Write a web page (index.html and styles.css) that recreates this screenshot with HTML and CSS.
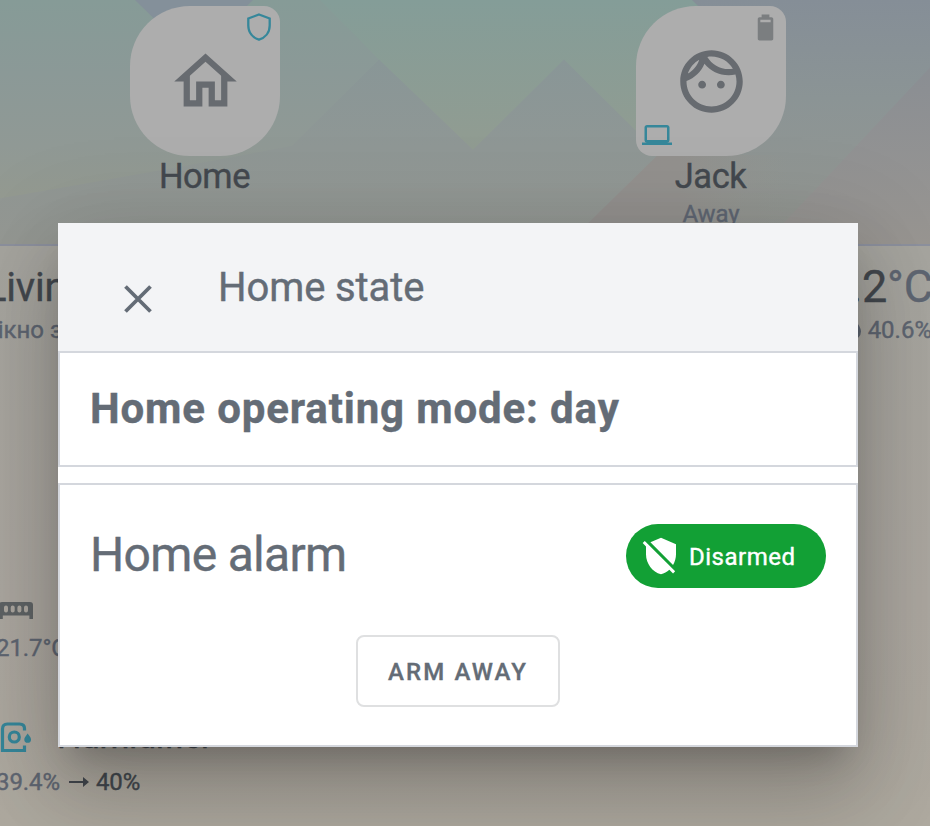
FILE: index.html
```html
<!DOCTYPE html>
<html lang="en">
<head>
<meta charset="utf-8">
<title>Home state</title>
<link rel="stylesheet" href="styles.css">
</head>
<body>
<div class="app">
  <header class="people">
    <svg class="scenery" viewBox="0 0 930 246" preserveAspectRatio="none">
      <defs>
        <linearGradient id="sky" x1="0" y1="0" x2="0" y2="1"><stop offset="0" stop-color="#849d98"/><stop offset=".55" stop-color="#909c92"/><stop offset="1" stop-color="#8f938c"/></linearGradient>
        <linearGradient id="hill" gradientUnits="userSpaceOnUse" x1="0" y1="50" x2="0" y2="246"><stop offset="0" stop-color="#889697"/><stop offset=".5" stop-color="#8f9795"/><stop offset="1" stop-color="#959893"/></linearGradient>
        <linearGradient id="left" gradientUnits="userSpaceOnUse" x1="0" y1="0" x2="0" y2="246"><stop offset="0" stop-color="#869b97"/><stop offset=".3" stop-color="#8b9997"/><stop offset=".6" stop-color="#909995"/><stop offset=".8" stop-color="#949a91"/><stop offset="1" stop-color="#979c93"/></linearGradient>
        <linearGradient id="right" x1="0" y1="0" x2="0" y2="1"><stop offset="0" stop-color="#858e97"/><stop offset=".4" stop-color="#8b9495"/><stop offset="1" stop-color="#959791"/></linearGradient>
        <linearGradient id="far" x1="0" y1="0" x2="0" y2="1"><stop offset="0" stop-color="#8a8e93"/><stop offset="1" stop-color="#999692"/></linearGradient>
        <linearGradient id="near" x1="0" y1="0" x2="1" y2="0"><stop offset="0" stop-color="#93908e"/><stop offset=".5" stop-color="#93918e"/><stop offset="1" stop-color="#939590" stop-opacity="0"/></linearGradient>
      </defs>
      <rect width="930" height="246" fill="url(#sky)"/>
      <path d="M0 0H320L379 60L280 160L240 246H0Z" fill="url(#left)"/>
      <path d="M135 0H253L194 58Z" fill="#84909a"/>
      <path d="M292 147L379 60L473 151L564 60L750 246H0V200Q200 165 292 147Z" fill="url(#hill)"/>
      <path d="M692 0H930V246H590L700 110L760 68Z" fill="url(#right)"/>
      <path d="M590 223L658 156H790V246H568Z" fill="url(#near)"/>
      <path d="M930 68V246H764Z" fill="url(#far)"/>
    </svg>
    <div class="person">
      <div class="tile tile-home">
        <svg class="main-icon" viewBox="0 0 24 24"><path d="M12 5.69L17 10.19V18H15V12H9V18H7V10.19L12 5.69M12 3L2 12H5V20H11V14H13V20H19V12H22L12 3"/></svg>
        <svg class="corner-icon shield" viewBox="0 0 24 28"><path d="M12 1.5L22.7 5.5V12.5C22.7 19.8 18 24.8 12 26.7C6 24.8 1.3 19.8 1.3 12.5V5.5Z"/></svg>
      </div>
      <div class="name">Home</div>
    </div>
    <div class="person">
      <div class="tile tile-jack">
        <svg class="main-icon" viewBox="0 0 24 24"><path fill-rule="evenodd" d="M10.25,13c0,0.69-0.56,1.25-1.25,1.25S7.75,13.69,7.75,13S8.31,11.75,9,11.75S10.25,12.31,10.25,13z M15,11.75c-0.69,0-1.25,0.56-1.25,1.25s0.56,1.25,1.25,1.25s1.25-0.56,1.25-1.25S15.69,11.75,15,11.75z M22,12c0,5.52-4.48,10-10,10S2,17.52,2,12S6.48,2,12,2S22,6.48,22,12z M10.66,4.12C12.06,6.44,14.6,8,17.5,8c0.46,0,0.91-0.05,1.34-0.12C17.44,5.56,14.9,4,12,4C11.54,4,11.09,4.05,10.66,4.12z M4.42,9.47c1.71-0.97,3.03-2.55,3.66-4.44C6.37,6,5.05,7.58,4.42,9.47z M20,12c0-0.78-0.12-1.53-0.33-2.24C18.97,9.91,18.25,10,17.5,10c-3.13,0-5.92-1.44-7.76-3.69C8.69,8.87,6.6,10.88,4,11.86C4.01,11.9,4,11.95,4,12c0,4.41,3.59,8,8,8S20,16.41,20,12z"/></svg>
        <svg class="corner-icon battery" viewBox="0 0 24 24"><path d="M16 8H8V6H16M16.67 4H15V2H9V4H7.33C6.6 4 6 4.6 6 5.33V20.67C6 21.4 6.6 22 7.33 22H16.67C17.41 22 18 21.41 18 20.67V5.33C18 4.6 17.4 4 16.67 4Z"/></svg>
        <svg class="corner-icon laptop" viewBox="0 0 24 24"><path d="M4,6H20V16H4M20,18A2,2 0 0,0 22,16V6C22,4.89 21.1,4 20,4H4C2.89,4 2,4.89 2,6V16A2,2 0 0,0 4,18H0V20H24V18H20Z"/></svg>
      </div>
      <div class="name">Jack</div>
      <div class="presence">Away</div>
    </div>
  </header>
  <main class="room">
    <div class="room-head">
      <div class="room-name">Living room</div>
      <div class="room-temp">22.2<span>°C</span></div>
    </div>
    <div class="room-sub">
      <div>вікно зачинене</div>
      <div class="humidity"><svg viewBox="0 0 18 24"><path d="M9 1C13 7 17 11 17 15.500A8 8 0 0 1 1 15.500C1 11 5 7 9 1Z"/></svg>40.6%</div>
    </div>
    <div class="device radiator">
      <svg viewBox="0 0 36 17"><path fill-rule="evenodd" d="M5 0H33Q36 0 36 3V17H32.400V13.500H5.800V17H2V3Q2 0 5 0ZM9 3.500Q7 3.500 7 5.500V8.500Q7 10.500 9 10.500Q11 10.500 11 8.500V5.500Q11 3.500 9 3.500ZM15.700 3.500Q13.700 3.500 13.700 5.500V8.500Q13.700 10.500 15.700 10.500Q17.700 10.500 17.700 8.500V5.500Q17.700 3.500 15.700 3.500ZM22.400 3.500Q20.400 3.500 20.400 5.500V8.500Q20.400 10.500 22.400 10.500Q24.400 10.500 24.400 8.500V5.500Q24.400 3.500 22.400 3.500ZM29 3.500Q27 3.500 27 5.500V8.500Q27 10.500 29 10.500Q31 10.500 31 8.500V5.500Q31 3.500 29 3.500Z"/></svg>
      <div class="reading">21.7°C</div>
    </div>
    <div class="device humidifier">
      <div class="device-head">
        <svg viewBox="0 0 31 31"><path class="line" d="M24.500 8.500V6.500Q24.500 2 19.500 2H7.500Q2.500 2 2.500 7V28.500H24.500V23.500"/><circle class="line" cx="14.300" cy="15" r="5"/><path class="drop" d="M27.600 11.500C29.500 14 31 15.500 31 17.500A3.300 3.300 0 0 1 24.300 17.500C24.300 15.500 26 14 27.600 11.500Z"/></svg>
        <span>Humidifier</span>
      </div>
      <div class="reading">39.4%<svg class="arrow" viewBox="0 0 20 12"><path d="M0 5H14V1L20 6L14 11V7H0Z"/></svg><b>40%</b></div>
    </div>
  </main>
  <section class="dialog">
    <div class="dialog-head">
      <svg class="close" viewBox="0 0 28 28"><path d="M1.500 1.500L26.500 26.500M26.500 1.500L1.500 26.500"/></svg>
      <div class="dialog-title">Home state</div>
    </div>
    <div class="card mode">Home operating mode: day</div>
    <div class="card alarm">
      <div class="alarm-head">
        <div class="alarm-title">Home alarm</div>
        <div class="chip">
          <svg viewBox="0 0 24 24"><path d="M1,4.27L2.28,3L20.500,21.22L19.230,22.500L17,20.250C15.570,21.570 13.870,22.540 12,23C6.840,21.740 3,16.550 3,11V6.270L1,4.270M12,1L21,5V11C21,13.280 20.350,15.500 19.230,17.410L5.650,3.820L12,1Z"/></svg>
          <span>Disarmed</span>
        </div>
      </div>
      <button class="arm"><span>ARM AWAY</span></button>
    </div>
  </section>
</div>
</body>
</html>
```
FILE: styles.css
```css
* { box-sizing: border-box; }
body { margin: 0; font-family: Roboto, sans-serif; -webkit-text-stroke: .4px currentColor; }
svg { display: block; flex: none; }

.app {
  position: relative;
  width: 930px;
  height: 826px;
  overflow: hidden;
  background: linear-gradient(#a6a59f 246px, #aca7a0 600px, #aea99f);
}

.people {
  position: relative;
  height: 246px;
  display: grid;
  grid-template-columns: 506px 506px;
  margin-left: -48px;
  padding-top: 6px;
}
.scenery { position: absolute; left: 48px; top: 0; width: 930px; height: 246px; border-bottom: 2px solid #8d919e; }
.person { position: relative; display: flex; flex-direction: column; align-items: center; }
.tile {
  position: relative;
  width: 150px;
  height: 150px;
  display: flex;
  align-items: center;
  justify-content: center;
  background: #adadad;
}
.tile-home { border-radius: 60px 16px 60px 60px; }
.tile-jack { border-radius: 60px 16px 60px 16px; }
.main-icon { width: 75px; height: 75px; fill: #676b70; }
.corner-icon { position: absolute; }
.shield { left: 117px; top: 7px; width: 24px; height: 28px; fill: none; stroke: #36879a; stroke-width: 2.3; }
.battery { right: 5.500px; top: 5.500px; width: 31px; height: 31px; fill: #7b7e80; }
.laptop { left: 6px; top: 114px; width: 30px; height: 30px; fill: #36879a; }
.name { font-size: 34.500px; line-height: 40px; padding-right: 1px; margin-bottom: 2px; letter-spacing: -.4px; color: #43484e; }
.presence { font-size: 24px; line-height: 28px; margin-top: 2px; letter-spacing: -.1px; color: #5f6672; }

.room-head { display: flex; justify-content: space-between; margin: 0 -3px 0 -15px; height: 68px; padding-top: 18px; }
.room-name { font-size: 40px; line-height: 48px; letter-spacing: -.2px; color: #43484e; }
.room-temp { font-size: 45px; line-height: 46px; color: #43484e; letter-spacing: -.1px; }
.room-temp span { color: #5f6672; }
.room-sub { display: flex; justify-content: space-between; margin: 0 -2px 0 -16px; font-size: 24px; line-height: 32px; color: #5f6672; }
.humidity { display: flex; gap: 6px; }
.humidity svg { width: 18px; height: 24px; margin-top: 2px; fill: #5f6672; }
.radiator { margin-top: 256px; }
.radiator > svg { width: 36px; height: 17px; margin-left: -3px; fill: #5f6365; }
.reading { display: flex; align-items: center; font-size: 24px; line-height: 28px; color: #5f6672; margin-left: -4px; letter-spacing: -.1px; }
.radiator .reading { margin-top: 15px; }
.humidifier { margin-top: 60px; }
.device-head { display: flex; gap: 26px; height: 32px; font-size: 34px; line-height: 26px; color: #43484e; }
.device-head svg { width: 31px; height: 31px; fill: none; }
.device-head span { padding-top: 1px; letter-spacing: -.3px; }
.line { stroke: #36879a; stroke-width: 3.200; }
.drop { fill: #36879a; }
.humidifier .reading { margin-top: 14px; }
.reading b { font-weight: 400; color: #43484e; }
.arrow { width: 20px; height: 12px; margin: 0 7px 0 9px; fill: #43484e; }

.dialog {
  position: absolute;
  left: 58px;
  top: 223px;
  width: 800px;
  height: 524px;
  background: #fff;
  color: #646c76;
  box-shadow: 0 22px 30px -14px rgba(0,0,0,.2), 0 48px 76px 6px rgba(0,0,0,.14), 0 18px 92px 16px rgba(0,0,0,.12);
}
.dialog-head { display: flex; align-items: flex-start; height: 128px; padding: 40px 66px 0; background: #f3f4f6; }
.close { width: 28px; height: 28px; margin-top: 22px; stroke: #646c76; stroke-width: 3.800; }
.dialog-title { margin-left: 66px; font-size: 40px; line-height: 50px; letter-spacing: -.1px; }
.card { border: 2px solid #d4d7dd; padding: 0 30px; }
.mode { height: 116px; font-size: 42px; font-weight: 700; line-height: 112px; letter-spacing: .86px; }
.alarm { margin-top: 16px; height: 264px; display: flex; flex-direction: column; align-items: center; }
.alarm-head { width: 100%; display: flex; align-items: center; justify-content: space-between; padding-top: 39px; }
.alarm-title { font-size: 48px; line-height: 64px; letter-spacing: -.68px; margin-top: -2px; }
.chip { display: flex; align-items: center; width: 200px; height: 64px; padding-left: 15px; gap: 8px; border-radius: 32px; background: #12a035; color: #fff; font-size: 24px; font-weight: 400; letter-spacing: .5px; -webkit-text-stroke: .4px #fff; }
.chip span { padding-top: 1px; }
.chip svg { width: 40px; height: 40px; fill: #fff; }
.arm { width: 204px; height: 72px; margin-top: 47px; padding: 2px 0 0; border: 2px solid #dfe0e1; border-radius: 8px; background: #fff; color: #646c76; font: 500 24px Roboto, sans-serif; letter-spacing: 2.140px; -webkit-text-stroke: .35px #646c76; }
```
